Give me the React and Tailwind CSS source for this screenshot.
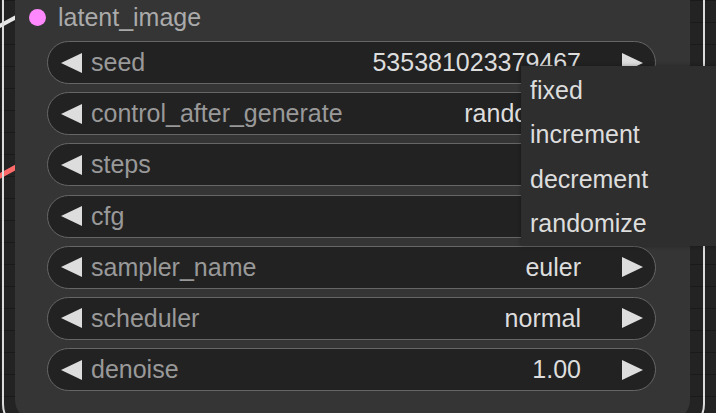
import React from "react";

const widgets = [
  { name: "seed", value: "535381023379467" },
  { name: "control_after_generate", value: "randomize" },
  { name: "steps", value: "20" },
  { name: "cfg", value: "8.0" },
  { name: "sampler_name", value: "euler" },
  { name: "scheduler", value: "normal" },
  { name: "denoise", value: "1.00" },
];

const menuItems = ["fixed", "increment", "decrement", "randomize"];

function Arrow({ dir }) {
  return (
    <svg width="21" height="20" viewBox="0 0 21 20" className="shrink-0">
      {dir === "left" ? (
        <polygon points="21,0 21,20 0,10" fill="#dddddd" />
      ) : (
        <polygon points="0,0 0,20 21,10" fill="#dddddd" />
      )}
    </svg>
  );
}

function Widget({ name, value }) {
  return (
    <div className="flex h-[43px] items-center rounded-full border-[1.5px] border-[#666] bg-[#222] pl-[13px] pr-[12px]">
      <Arrow dir="left" />
      <span className="ml-[9px] text-[#999]">{name}</span>
      <span className="ml-auto mr-[41px] text-[#ddd]">{value}</span>
      <Arrow dir="right" />
    </div>
  );
}

export default function App() {
  return (
    <div
      className="relative h-[413px] w-[716px] overflow-hidden bg-[#232323] bg-[linear-gradient(#1a1a1a_1px,transparent_1px),linear-gradient(90deg,#1c1c1c_1px,transparent_1px)] bg-[size:22px_22px] text-[25px] leading-none"
      style={{ fontFamily: '"Liberation Sans", Arial, sans-serif' }}
    >
      {/* links entering the node */}
      <svg className="absolute left-0 top-0" width="40" height="413">
        <line x1="-4" y1="28" x2="20" y2="15" stroke="#e8e8e8" strokeWidth="4" />
        <line x1="-4" y1="178" x2="20" y2="165" stroke="#ff6b6b" strokeWidth="5" />
      </svg>

      {/* selection outline */}
      <div className="absolute left-[2px] top-[-60px] h-[492px] w-[703px] rounded-[28px] border-2 border-[#dcdcdc]" />

      {/* node body */}
      <div className="absolute left-[15px] top-0 flex h-[420px] w-[675px] flex-col rounded-b-[20px] bg-[#353535] pl-[32px] pr-[34px]">
        <div className="-ml-[32px] flex h-[34px] items-center pl-[14px]">
          <span className="h-[17px] w-[17px] shrink-0 rounded-full bg-[#ff88ff]" />
          <span className="ml-[12px] text-[#aaa]">latent_image</span>
        </div>
        <div className="mt-[7px] flex flex-col gap-[8.2px]">
          {widgets.map((w) => (
            <Widget key={w.name} name={w.name} value={w.value} />
          ))}
        </div>
      </div>

      {/* combo context menu */}
      <div className="absolute left-[521px] top-[66px] flex w-[200px] flex-col bg-[#2e2e2e] pt-[2px] shadow-[0_0_4px_rgba(0,0,0,0.35)]">
        {menuItems.map((item) => (
          <div key={item} className="flex h-[44.5px] items-center pl-[9px] text-[#ddd]">
            {item}
          </div>
        ))}
      </div>
    </div>
  );
}
